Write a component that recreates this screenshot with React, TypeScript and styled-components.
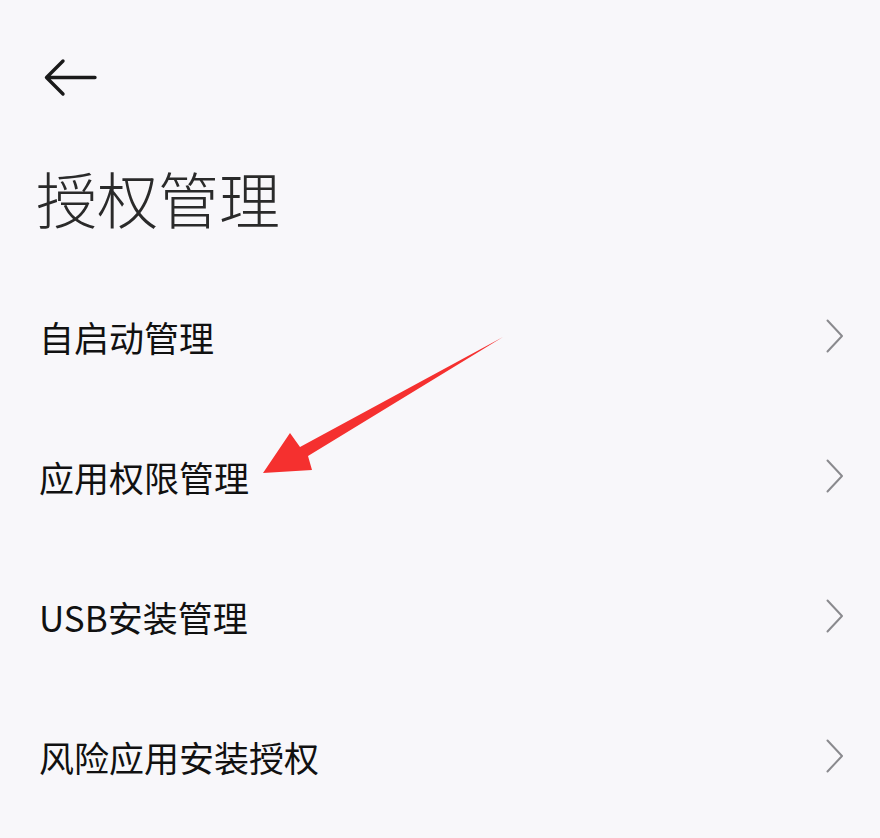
import React, { FC } from "react";
import styled, { createGlobalStyle } from "styled-components";

const GlobalStyle = createGlobalStyle`
  html, body {
    margin: 0;
    padding: 0;
    background: #f8f7fa;
  }
  body {
    font-family: "Noto Sans CJK SC", "Noto Sans", sans-serif;
  }
`;

const items = ["自启动管理", "应用权限管理", "USB安装管理", "风险应用安装授权"];

const App: FC = () => {
  return (
    <Page>
      <GlobalStyle />
      <TopBar>
        <BackButton aria-label="返回">
          <svg width="54" height="40" viewBox="0 0 54 40" fill="none">
            <path
              d="M52 19.5H4M20 3L3.5 19.5L20 36"
              stroke="#1a1a1a"
              strokeWidth="3.4"
              strokeLinecap="round"
              strokeLinejoin="round"
            />
          </svg>
        </BackButton>
      </TopBar>
      <Title>授权管理</Title>
      <List>
        {items.map((label) => (
          <Row key={label}>
            <RowLabel>{label}</RowLabel>
            <Chevron width="18" height="34" viewBox="0 0 18 34" fill="none">
              <polyline
                points="1.5,1.5 16,17 1.5,32.5"
                stroke="#8a8a8e"
                strokeWidth="2"
                strokeLinecap="round"
                strokeLinejoin="round"
              />
            </Chevron>
          </Row>
        ))}
      </List>
      <Annotation width="880" height="838" viewBox="0 0 880 838">
        <path
          d="M503 337 L308 456 L312 470 L263 473 L290 433 L300 447 Z"
          fill="#f5302f"
        />
      </Annotation>
    </Page>
  );
};

export default App;

const Page = styled.div`
  position: relative;
  width: 880px;
  height: 838px;
  overflow: hidden;
  padding: 0 36px 0 38px;
  box-sizing: border-box;
  background: #f8f7fa;
`;

const TopBar = styled.div`
  display: flex;
  align-items: center;
  height: 40px;
  padding-top: 58px;
`;

const BackButton = styled.div`
  display: flex;
  margin-left: 5px;
`;

const Title = styled.h1`
  margin: 64px 0 0 -2px;
  font-size: 61px;
  line-height: 72px;
  font-weight: 300;
  color: #2a2a2a;
`;

const List = styled.div`
  display: flex;
  flex-direction: column;
  margin-top: 32px;
`;

const Row = styled.div`
  display: flex;
  align-items: center;
  justify-content: space-between;
  height: 140px;
`;

const RowLabel = styled.span`
  font-size: 35px;
  color: #111;
  margin-left: 1px;
  font-weight: 400;
`;

const Chevron = styled.svg`
  margin-right: 0;
`;

const Annotation = styled.svg`
  position: absolute;
  left: 0;
  top: 0;
  pointer-events: none;
`;
